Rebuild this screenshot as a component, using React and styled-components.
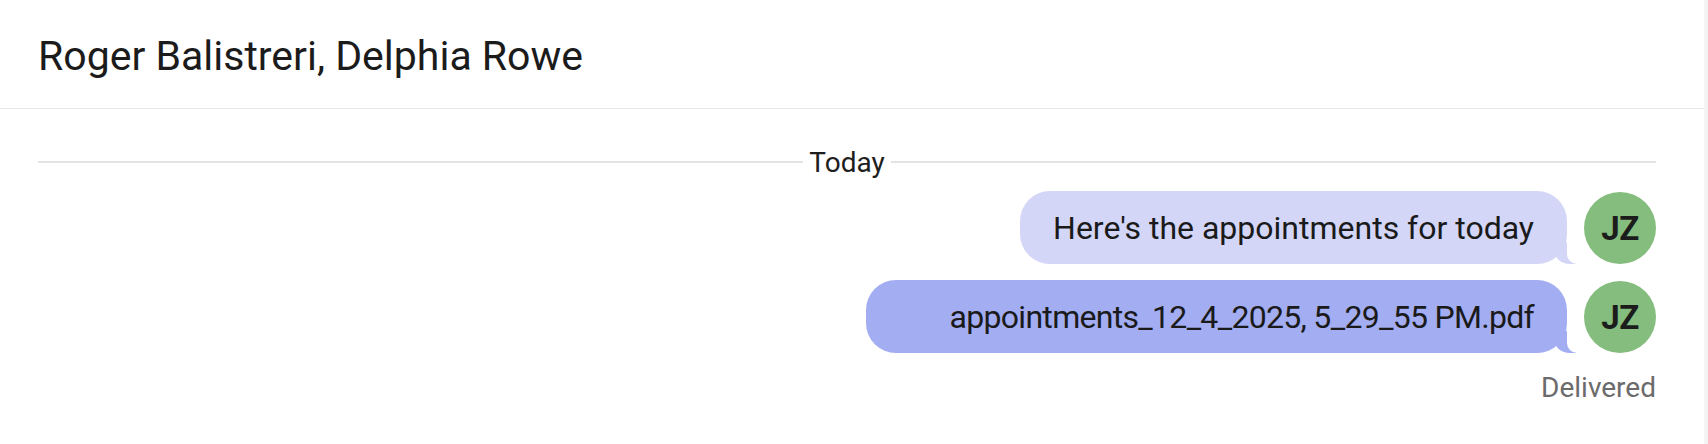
import React from 'react';
import styled, { createGlobalStyle } from 'styled-components';

const GlobalStyle = createGlobalStyle`
  html, body {
    margin: 0;
    padding: 0;
    background: #ffffff;
  }
  body {
    font-family: Roboto, "Liberation Sans", sans-serif;
    color: #1c1c1c;
  }
`;

const Page = styled.div`
  display: flex;
  width: 100%;
  height: 100vh;
  background: #ffffff;
`;

const Main = styled.div`
  flex: 1;
  display: flex;
  flex-direction: column;
  min-width: 0;
`;

const ScrollTrack = styled.div`
  width: 4px;
  background: linear-gradient(to right, #f6f6f6, #f1f1f1);
`;

const Header = styled.div`
  height: 109px;
  box-sizing: border-box;
  display: flex;
  align-items: center;
  padding: 3px 38px 0 38px;
  border-bottom: 1px solid #e6e6e6;
  font-size: 41px;
  line-height: 48px;
  color: #1b1b1b;
`;

const Thread = styled.div`
  display: flex;
  flex-direction: column;
  padding: 0 48px 0 38px;
`;

const DateDivider = styled.div`
  display: flex;
  align-items: center;
  gap: 6px;
  margin-top: 40px;
  font-size: 28px;
  line-height: 28px;
  color: #1e1e1e;

  &::before,
  &::after {
    content: "";
    flex: 1;
    height: 1.5px;
    margin-top: -2px;
    background: #e4e4e4;
  }
`;

const Row = styled.div`
  display: flex;
  justify-content: flex-end;
  align-items: flex-end;
  gap: 17px;
  margin-top: ${p => p.$top}px;
`;

const Bubble = styled.div`
  position: relative;
  padding: 19px 33px 18px ${p => p.$padLeft}px;
  border-radius: 30px;
  background: ${p => p.$bg};
  font-size: 32px;
  line-height: 36px;
  letter-spacing: ${p => p.$tracking}px;
  color: #1a1a1a;
  white-space: nowrap;

  &::before {
    content: "";
    position: absolute;
    bottom: 0;
    right: -9px;
    width: 22px;
    height: 22px;
    background: ${p => p.$bg};
    border-bottom-left-radius: 16px 14px;
  }

  &::after {
    content: "";
    position: absolute;
    bottom: 0;
    right: -12px;
    width: 12px;
    height: 24px;
    background: #ffffff;
    border-bottom-left-radius: 10px;
  }
`;

const Avatar = styled.div`
  width: 72px;
  height: 72px;
  flex-shrink: 0;
  border-radius: 50%;
  background: #84bd7d;
  display: flex;
  align-items: center;
  justify-content: center;
  font-size: 33px;
  font-weight: 700;
  letter-spacing: -0.5px;
  color: #1c1c1c;
`;

const Status = styled.div`
  margin-top: 19px;
  text-align: right;
  font-size: 28px;
  line-height: 32px;
  color: #6b6b6b;
`;

const messages = [
  { id: 1, text: "Here's the appointments for today", bg: '#d3d6f7', top: 14, padLeft: 33, tracking: 0 },
  { id: 2, text: 'appointments_12_4_2025, 5_29_55 PM.pdf', bg: '#a3adf2', top: 16, padLeft: 84, tracking: -0.7 },
];

export default function App() {
  return (
    <>
      <GlobalStyle />
      <Page>
        <Main>
          <Header>Roger Balistreri, Delphia Rowe</Header>
          <Thread>
            <DateDivider>Today</DateDivider>
            {messages.map(m => (
              <Row key={m.id} $top={m.top}>
                <Bubble $bg={m.bg} $padLeft={m.padLeft} $tracking={m.tracking}>
                  {m.text}
                </Bubble>
                <Avatar>JZ</Avatar>
              </Row>
            ))}
            <Status>Delivered</Status>
          </Thread>
        </Main>
        <ScrollTrack />
      </Page>
    </>
  );
}
